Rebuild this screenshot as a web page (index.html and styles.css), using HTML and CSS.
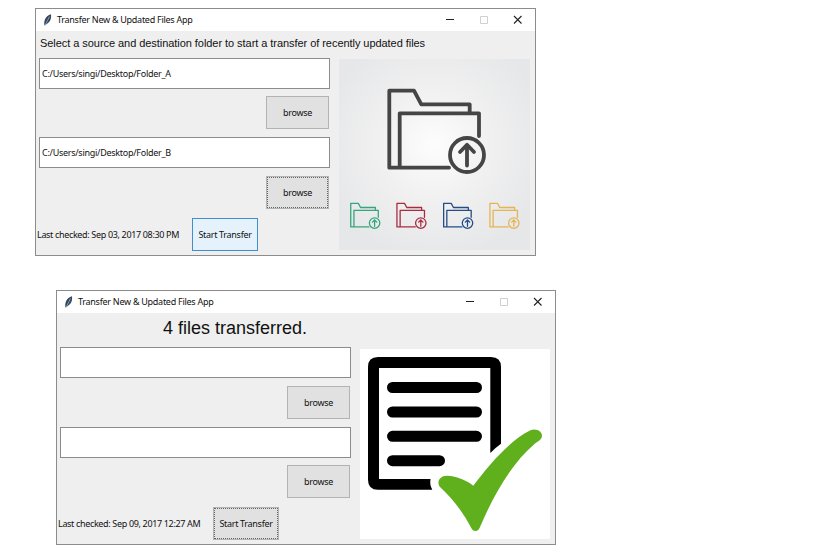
FILE: index.html
```html
<!DOCTYPE html>
<html lang="en">
<head>
<meta charset="utf-8">
<title>Transfer New &amp; Updated Files App</title>
<link rel="stylesheet" href="styles.css">
</head>
<body>
<svg width="0" height="0" class="defs">
  <defs>
    <g id="folder" fill="none" stroke-linejoin="round" stroke-linecap="round">
      <path d="M110 108.7H50.3V31.7H75L82.3 45.3H130.7V54.3M60.7 108.7V54.3H140V77"/>
      <circle cx="128" cy="96" r="17"/>
      <path d="M128 106.5V86M121 93L128 85.800L135 93"/>
    </g>
    <g id="feather">
      <path d="M1.500 11.500C0.500 7 2.500 2 8 0.300C8.500 4 7.500 8 3.800 10Z" fill="#34465b"/>
      <path d="M2 11.500L6.500 2.500" stroke="#8fb0cc" stroke-width=".8" fill="none"/>
    </g>
    <g id="controls" fill="none">
      <path d="M0 6.500H8" stroke="#222"/>
      <path d="M34.500 3.500H41.500V10.500H34.500Z" stroke="#d0d0d0"/>
      <path d="M68 3L75.500 10.500M75.500 3L68 10.500" stroke="#222" stroke-width="1.100"/>
    </g>
  </defs>
</svg>
<section class="window first">
  <header class="titlebar">
    <svg class="feather" width="10" height="12"><use href="#feather"/></svg>
    <span class="title">Transfer New &amp; Updated Files App</span>
    <svg class="controls" width="77" height="14"><use href="#controls"/></svg>
  </header>
  <p class="message">Select a source and destination folder to start a transfer of recently updated files</p>
  <main class="content">
    <div class="form">
      <div class="entry"><span>C:/Users/singi/Desktop/Folder_A</span></div>
      <button class="browse source">browse</button>
      <div class="entry"><span>C:/Users/singi/Desktop/Folder_B</span></div>
      <button class="browse destination focused">browse</button>
      <div class="footer"><span class="checked">Last checked: Sep 03, 2017 08:30 PM</span><button class="start hover">Start Transfer</button></div>
    </div>
    <svg class="picture" width="191" height="191" viewBox="0 0 191 191">
      <defs><radialGradient id="glow" cx=".5" cy=".45" r=".6"><stop offset="0" stop-color="#fdfdfd"/><stop offset=".5" stop-color="#f0f0f1"/><stop offset="1" stop-color="#e6e7e8"/></radialGradient></defs>
      <rect width="191" height="191" fill="url(#glow)"/>
      <use href="#folder" stroke="#454545" stroke-width="3.800"/>
      <g stroke-width="4.200">
        <use href="#folder" transform="translate(-3.700 134.600) scale(.307)" stroke="#35a57c"/>
        <use href="#folder" transform="translate(42.500 134.600) scale(.307)" stroke="#a82c40"/>
        <use href="#folder" transform="translate(89.200 134.600) scale(.307)" stroke="#244d86"/>
        <use href="#folder" transform="translate(135.500 134.600) scale(.307)" stroke="#e6b455"/>
      </g>
    </svg>
  </main>
</section>
<section class="window second">
  <header class="titlebar">
    <svg class="feather" width="10" height="12"><use href="#feather"/></svg>
    <span class="title">Transfer New &amp; Updated Files App</span>
    <svg class="controls" width="77" height="14"><use href="#controls"/></svg>
  </header>
  <p class="message">4 files transferred.</p>
  <main class="content">
    <div class="form">
      <div class="entry"></div>
      <button class="browse source">browse</button>
      <div class="entry"></div>
      <button class="browse destination">browse</button>
      <div class="footer"><span class="checked">Last checked: Sep 09, 2017 12:27 AM</span><button class="start focused">Start Transfer</button></div>
    </div>
    <svg class="picture" width="190" height="190" viewBox="0 0 190 190">
      <rect width="190" height="190" fill="#fff"/>
      <path d="M18 8H131Q141 8 141 18V94.700Q135 99 130.300 104V19H19V130H70.500Q69.500 136 72.300 140.700H18Q8 140.700 8 130.700V18Q8 8 18 8Z"/>
      <path d="M32.500 38.500H116.500M32.500 63H116.500M32.500 87.300H116.500M32.500 111.700H79.500" stroke="#000" stroke-width="11" stroke-linecap="round"/>
      <path d="M80 138C76 133 80 126.500 87 126.700C97 127 107 131.500 113.300 136.700C128 117 149 92 170 81.500C177 78.500 183.500 83.500 181.700 88.500C180.500 91.500 178 92 175 94.500C152 114 134 145 119.800 178.500C118 183.200 113 183.200 111 178.500C103 163 92 149 80 138Z" fill="#60b01e"/>
    </svg>
  </main>
</section>
</body>
</html>
```
FILE: styles.css
```css
* { box-sizing: border-box; }
body {
  margin: 0;
  padding: 8px 0 0 35px;
  width: 837px;
  height: 555px;
  overflow: hidden;
  background: #fff;
  color: #111;
  font: 9px/12px "Noto Sans", "Open Sans", sans-serif;
  letter-spacing: -0.27px;
}
.defs { display: block; }
.window {
  display: flex;
  flex-direction: column;
  width: 501px;
  height: 248px;
  border: 1px solid #8c8c8c;
  background: #efefef;
}
.second { width: 500px; height: 255px; margin: 34px 0 0 21px; }
.titlebar {
  display: flex;
  align-items: center;
  height: 22px;
  padding: 0 12px 0 7px;
  background: #fff;
}
.feather { margin-right: 4px; }
.title { flex: 1; white-space: nowrap; }
.message {
  height: 28px;
  margin: 0;
  padding: 5px 0 0 4px;
  font: 11px/14px "Liberation Sans", Arial, sans-serif;
  letter-spacing: -0.053px;
  white-space: nowrap;
}
.second .message {
  height: 34px;
  padding: 5px 0 0 106px;
  font-size: 18px;
  line-height: 20px;
  letter-spacing: 0;
}
.content { display: flex; }
.form { display: flex; flex-direction: column; width: 294px; margin-right: 9px; }
.first .form { margin-top: -1px; }
.entry {
  display: flex;
  align-items: center;
  width: 291px;
  height: 31px;
  margin-left: 3px;
  padding-left: 2px;
  border: 1px solid #8c8c8c;
  background: #fff;
  flex: none;
}
button {
  padding: 0;
  border: 1px solid #b3b3b3;
  background: #e1e1e1;
  color: #111;
  font: inherit;
  letter-spacing: -0.3px;
  white-space: nowrap;
}
.browse { width: 63px; height: 33px; margin: 8px 1px 8px auto; flex: none; }
.first .source, .second .destination { margin-top: 7px; }
.focused { outline: 1px dotted #666; outline-offset: -2px; }
.footer { display: flex; align-items: center; margin-top: 1px; }
.checked { width: 156px; padding-left: 1px; letter-spacing: -0.34px; white-space: nowrap; }
.start { width: 66px; height: 33px; }
.hover { border-color: #3f8fce; background: #e5f1fb; }
.picture { display: block; flex: none; }
.second .picture { margin-top: 2px; }
```
